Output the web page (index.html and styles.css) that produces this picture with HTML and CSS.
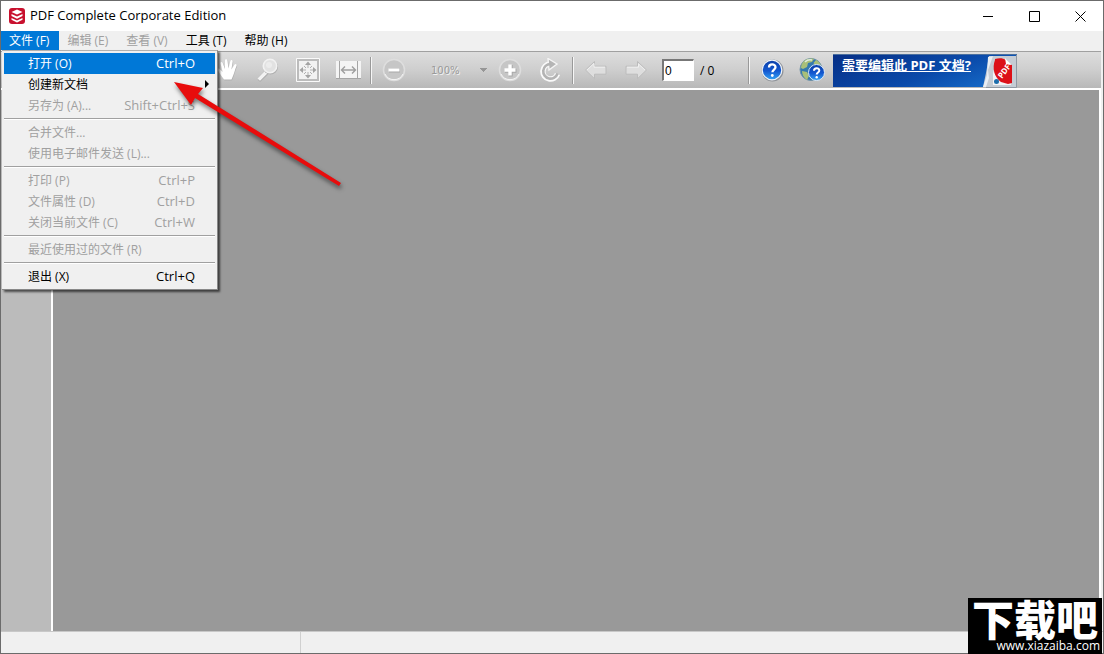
FILE: index.html
```html
<!DOCTYPE html>
<html lang="zh-CN">
<head>
    <meta charset="UTF-8">
    <meta name="viewport" content="width=device-width, initial-scale=1.0">
    <title>PDF Complete Corporate Edition</title>
    <link rel="stylesheet" href="styles.css">
</head>
<body>
<div class="window">
    <header class="titlebar">
        <svg class="app-icon" viewBox="0 0 16 16" width="16" height="16">
            <rect width="16" height="16" rx="3" fill="#c8102e"/>
            <path d="M8 1.500l5.500 2.500L8 6.500 2.500 4z" fill="#fff"/>
            <path d="M2.500 6l5.500 2.500L13.500 6v2L8 10.800 2.500 8zM2.500 10L8 12.500l5.500-2.500v1.800L8 14.600l-5.500-2.800z" fill="#fff"/>
        </svg>
        <span class="title">PDF Complete Corporate Edition</span>
        <div class="window-buttons">
            <button type="button" aria-label="最小化"><svg viewBox="0 0 11 11" width="11" height="11"><path d="M0 5.500h10"/></svg></button>
            <button type="button" aria-label="最大化"><svg viewBox="0 0 11 11" width="11" height="11"><path d="M.5 .5h10v10h-10z"/></svg></button>
            <button type="button" aria-label="关闭"><svg viewBox="0 0 11 11" width="11" height="11"><path d="M.5 .5l10 10M10.500 .5l-10 10"/></svg></button>
        </div>
    </header>

    <nav class="menubar">
        <div class="menu">
            <button type="button" class="menu-title active">文件 (F)</button>
            <div class="dropdown">
                <button type="button" class="item selected"><span>打开 (O)</span><span class="key">Ctrl+O</span></button>
                <button type="button" class="item submenu"><span>创建新文档</span></button>
                <button type="button" class="item" disabled><span>另存为 (A)...</span><span class="key">Shift+Ctrl+S</span></button>
                <hr>
                <button type="button" class="item" disabled><span>合并文件...</span></button>
                <button type="button" class="item" disabled><span>使用电子邮件发送 (L)...</span></button>
                <hr>
                <button type="button" class="item" disabled><span>打印 (P)</span><span class="key">Ctrl+P</span></button>
                <button type="button" class="item" disabled><span>文件属性 (D)</span><span class="key">Ctrl+D</span></button>
                <button type="button" class="item" disabled><span>关闭当前文件 (C)</span><span class="key">Ctrl+W</span></button>
                <hr>
                <button type="button" class="item" disabled><span>最近使用过的文件 (R)</span></button>
                <hr>
                <button type="button" class="item"><span>退出 (X)</span><span class="key">Ctrl+Q</span></button>
            </div>
        </div>
        <button type="button" class="menu-title" disabled>编辑 (E)</button>
        <button type="button" class="menu-title" disabled>查看 (V)</button>
        <button type="button" class="menu-title">工具 (T)</button>
        <button type="button" class="menu-title">帮助 (H)</button>
    </nav>

    <div class="toolbar">
        <button type="button" class="tool" aria-label="手形工具">
            <svg viewBox="0 0 24 24" width="24" height="24">
                <path class="shade" d="M8.500 22.500C6 19 3.500 15 2 12.500c-.6-1.300 1-2 2-1l3.200 3L5 6c-.3-1.600 1.700-2 2.200-.6l2.300 6L9.600 3c0-1.600 2.300-1.600 2.500 0l.8 8 2-7.500c.5-1.500 2.600-1 2.300.6l-1.300 8 3.200-5c1-1.300 2.600-.3 2 1.200-2 4.500-2.500 9-5.100 14.200z"/>
                <path fill="#fff" d="M8 21.500C5.500 18 3 14.500 1.500 12c-.6-1.300 1-2 2-1l3.200 3L4.500 5.500c-.3-1.600 1.700-2 2.200-.6l2.300 6L9 2.500c0-1.600 2.300-1.600 2.500 0l.9 8 2-7.500c.5-1.500 2.600-1 2.300.6l-1.300 8 3.200-5c1-1.300 2.600-.3 2 1.200-2 4.500-2.500 8.700-5.100 13.700z"/>
            </svg>
        </button>
        <button type="button" class="tool" aria-label="放大镜">
            <svg viewBox="0 0 24 24" width="24" height="24">
                <path class="shade" d="M10 14.500l2.200 2-8 7.500-2.500-2z"/>
                <path d="M9 12.500l2.800 2.700-7.800 7.800-2.800-2.500z" fill="#f2f2f2" stroke="#b2b2b2" stroke-width=".5"/>
                <circle cx="14.500" cy="9" r="7.500" class="shade"/>
                <circle cx="14" cy="8" r="6.700" fill="#e2e2e2" stroke="#f2f2f2" stroke-width="1.600"/>
                <circle cx="13" cy="7" r="3" fill="#ececec"/>
            </svg>
        </button>
        <button type="button" class="tool" aria-label="适合页面">
            <svg viewBox="0 0 24 24" width="24" height="24">
                <path d="M.5 .5h23v23H.5z" fill="#bcbcbc" stroke="#fafafa"/>
                <path d="M3 3h18v18H3z" fill="#f2f2f2"/>
                <path d="M12 3.500l3 3.500H9zM12 20.500l3-3.500H9zM3.500 12l3.500-3v6zM20.500 12l-3.500-3v6z" fill="#a3a3a3"/>
                <path d="M12 7v3M12 14v3M7 12h3M14 12h3M8 8l2 2M16 8l-2 2M8 16l2-2M16 16l-2-2" stroke="#b1b1b1"/>
            </svg>
        </button>
        <button type="button" class="tool" aria-label="适合宽度">
            <svg viewBox="0 0 25 20" width="25" height="20">
                <path d="M0 1h25v18H0z" fill="#f4f4f4"/>
                <path d="M3.500 1v17M21.500 1v17M0 18.500h25" stroke="#a5a5a5"/>
                <path d="M5.500 10h14M9 6.500L5.500 10 9 13.500M16 6.500l3.500 3.500-3.500 3.500" fill="none" stroke="#9e9e9e" stroke-width="1.400"/>
            </svg>
        </button>
        <span class="divider"></span>
        <button type="button" class="tool" aria-label="缩小">
            <svg viewBox="0 0 24 24" width="24" height="24">
                <circle cx="12" cy="12" r="10.500" fill="#c6c6c6" stroke="#dedede" stroke-width="1.500"/>
                <path d="M3 16a10 10 0 0 0 18 0" fill="none" stroke="#f4f4f4"/>
                <path d="M7 12.500h11" stroke="#a8a8a8" stroke-width="4"/>
                <path d="M6.500 12h11" stroke="#fff" stroke-width="3"/>
            </svg>
        </button>
        <select class="zoom" aria-label="缩放" disabled><option>100%</option></select>
        <button type="button" class="tool" aria-label="放大">
            <svg viewBox="0 0 24 24" width="24" height="24">
                <circle cx="12" cy="12" r="10.500" fill="#c6c6c6" stroke="#dedede" stroke-width="1.500"/>
                <path d="M3 16a10 10 0 0 0 18 0" fill="none" stroke="#f4f4f4"/>
                <path d="M7 12.700h11.500M12.700 7v11.500" stroke="#a8a8a8" stroke-width="4"/>
                <path d="M6.500 12h11M12 6.500v11" stroke="#fff" stroke-width="3.400"/>
            </svg>
        </button>
        <button type="button" class="tool" aria-label="旋转">
            <svg viewBox="0 0 24 24" width="24" height="24">
                <path d="M12 6a7.500 7.500 0 1 0 7.500 10" fill="none" stroke="#fafafa" stroke-width="5.500"/>
                <path d="M10 .5l9 5.500-8 6z" fill="#b5b5b5" stroke="#f5f5f5" stroke-width="1.400"/>
                <path d="M12.500 6a7.300 7.300 0 1 0 7 9.500" fill="none" stroke="#b3b3b3" stroke-width="2.600"/>
            </svg>
        </button>
        <span class="divider"></span>
        <button type="button" class="tool" aria-label="上一页">
            <svg viewBox="0 0 24 20" width="24" height="20">
                <path d="M1.500 10l9-8.500v4.700H22v8H10.500v4.500z" fill="#dedede" stroke="#bcbcbc"/>
                <path d="M3 10l7-6.500v3.700h11" fill="none" stroke="#f0f0f0"/>
            </svg>
        </button>
        <button type="button" class="tool" aria-label="下一页">
            <svg viewBox="0 0 24 20" width="24" height="20">
                <path d="M22.500 10l-9-8.500v4.700H2v8h11.500v4.500z" fill="#dedede" stroke="#bcbcbc"/>
                <path d="M3 7.200h11.500V4l6.500 6" fill="none" stroke="#f0f0f0"/>
            </svg>
        </button>
        <input type="text" class="page" id="page" value="0">
        <label class="pages" for="page">/ 0</label>
        <span class="divider"></span>
        <button type="button" class="tool" aria-label="帮助">
            <svg viewBox="0 0 24 24" width="24" height="24">
                <defs>
                    <linearGradient id="blue" x1="0" y1="0" x2="0" y2="1">
                        <stop offset="0" stop-color="#0b3fa8"/>
                        <stop offset=".55" stop-color="#1358d0"/>
                        <stop offset="1" stop-color="#35a3f5"/>
                    </linearGradient>
                </defs>
                <circle cx="12.500" cy="12.500" r="11" fill="#8f9399"/>
                <circle cx="12" cy="12" r="9.800" fill="url(#blue)" stroke="#f0f4fa" stroke-width="1.200"/>
                <path d="M9 9.500c0-4 6.500-4 6.500-.2 0 2.300-3.100 2.300-3.100 5" fill="none" stroke="#fff" stroke-width="2.300"/>
                <circle cx="12.300" cy="17.500" r="1.400" fill="#fff"/>
            </svg>
        </button>
        <button type="button" class="tool" aria-label="在线帮助">
            <svg viewBox="0 0 26 26" width="26" height="26">
                <circle cx="12" cy="12.500" r="11" fill="#3479ae" stroke="#6f92a8"/>
                <path d="M5 4c3-2.500 7-3 10-2l-2 3-4 1-1 4-4 2-2-1c0-3 1-5 3-7zM17 3c4 2 5 5 5.500 8l-5-1-3-4zM3 14l5 1 2 4-2 4c-3-2-5-5-5-9z" fill="#a9bf78"/>
                <path d="M6 5c2-2 5-2.500 7-2" fill="none" stroke="#dfeadf" stroke-width="1.500"/>
                <circle cx="17.500" cy="15.500" r="8" fill="url(#blue)" stroke="#dce9f7"/>
                <path d="M15 13.800c0-3.500 5.300-3.500 5.300-.3 0 2-2.600 1.900-2.600 4" fill="none" stroke="#fff" stroke-width="2"/>
                <circle cx="17.700" cy="20.300" r="1.200" fill="#fff"/>
            </svg>
        </button>
        <a class="banner" href="#">
            <span class="banner-text">需要编辑此 PDF 文档?</span>
            <svg class="banner-logo" viewBox="0 0 34 33" width="34" height="33">
                <path d="M6 1h27v31H0l3-14z" fill="#c5ccd4"/>
                <path d="M5 2l5-1-5 14 1 8-3 9H0l4-12z" fill="#e9eef4"/>
                <path d="M33.500 0v32.500H3" fill="none" stroke="#8f98a2"/>
                <path d="M10 18v12h18V9l-6-5h-8z" fill="#f3f3f5"/>
                <path d="M12 4c4-1 8-1 11 1l1 4 5 1v18l-4 1-7-2c-7-5-9-14-6-22z" fill="#dc1018"/>
                <path d="M22 3l6 7-5-1z" fill="#fff"/>
                <circle cx="13.500" cy="26.500" r="2.500" fill="#1d6eac"/>
                <text x="0" y="0" transform="translate(19 24) rotate(-54)" fill="#fff" font-size="8" font-weight="bold">PDF</text>
            </svg>
        </a>
    </div>

    <main class="workspace">
        <aside class="sidebar"></aside>
        <section class="document"></section>
    </main>

    <footer class="statusbar">
        <div class="status-cell"></div>
    </footer>
</div>

<!-- 指向菜单的红色箭头 -->
<svg class="pointer" viewBox="0 0 180 116" width="180" height="116">
    <path d="M4 6l29 6-5 6 143 89-2 3L25 22l-4 7z" fill="#e80c0c"/>
</svg>

<div class="watermark">
    <span class="watermark-name">下载吧</span>
    <span class="watermark-url">www.xiazaiba.com</span>
</div>
</body>
</html>
```

FILE: styles.css
```css
* {
    box-sizing: border-box;
}
body {
    margin: 0;
    font-family: "Open Sans", "Noto Sans CJK SC", sans-serif;
    font-size: 12px;
    color: #000000;
    overflow: hidden;
}
button {
    font: inherit;
    color: inherit;
    background: none;
    border: none;
    padding: 0;
}
.window {
    height: 100vh;
    display: flex;
    flex-direction: column;
    border: 1px solid #6b6b6b;
    background-color: #f0f0f0;
}

/* 标题栏 */
.titlebar {
    display: flex;
    align-items: center;
    height: 30px;
    padding-left: 8px;
    background-color: #ffffff;
}
.title {
    margin-left: 5px;
    padding-bottom: 2px;
    font-size: 13px;
}
.window-buttons {
    display: flex;
    margin-left: auto;
}
.window-buttons button {
    display: flex;
    align-items: center;
    justify-content: center;
    width: 46px;
    height: 30px;
}
.window-buttons path {
    fill: none;
    stroke: #000000;
}

/* 菜单栏 */
.menubar {
    display: flex;
    height: 20px;
    flex-shrink: 0;
}
.menu {
    position: relative;
}
.menu-title {
    height: 19px;
    padding: 0 10px 0 8px;
    line-height: 19px;
    white-space: nowrap;
}
.menu-title:disabled, .item:disabled {
    color: #a0a0a0;
}
.menu-title.active, .item.selected {
    background-color: #0078d7;
    color: #ffffff;
}
.dropdown {
    position: absolute;
    z-index: 10;
    top: 19px;
    left: 1px;
    width: 216px;
    padding: 2px;
    background-color: #f0f0f0;
    border-top: 1px solid #b0b0b0;
    border-right: 1px solid #888888;
    border-bottom: 1px solid #888888;
    box-shadow: 2px 2px 2px rgba(0, 0, 0, 0.6);
}
.item {
    display: flex;
    align-items: center;
    justify-content: space-between;
    width: 100%;
    height: 21px;
    padding: 0 20px 2px 24px;
    white-space: nowrap;
}
.key {
    font-size: 13px;
}
.item.submenu {
    padding-right: 6px;
}
.item.submenu::after {
    content: "";
    border: 4px solid transparent;
    border-left-color: #000000;
    border-right: none;
}
.dropdown hr {
    height: 2px;
    margin: 2px 0;
    border: none;
    border-top: 1px solid #a0a0a0;
    background-color: #ffffff;
}

/* 工具栏 */
.toolbar {
    display: flex;
    align-items: center;
    height: 39px;
    flex-shrink: 0;
    margin-right: 2px;
    padding-left: 207px;
    border-top: 1px solid #a0a0a0;
    border-bottom: 2px solid #ffffff;
    background: linear-gradient(#dddddd, #cecece 50%, #b8b8b8);
}
.tool {
    display: flex;
    align-items: center;
    justify-content: center;
    flex: none;
    width: 40px;
    height: 34px;
}
.shade {
    fill: #b0b0b0;
}
.divider {
    flex: none;
    width: 2px;
    height: 27px;
    margin: 0 2px;
    border-left: 1px solid #999999;
    background-color: #f6f6f6;
}
.zoom {
    width: 76px;
    padding: 0 0 0 17px;
    border: none;
    appearance: none;
    font-family: "DejaVu Sans", sans-serif;
    font-size: 10px;
    color: #999999;
    opacity: 1;
    text-shadow: 1px 1px 0 #f2f2f2;
    background: linear-gradient(135deg, #969696 50%, transparent 50%) 70px 50% / 4px 4px no-repeat,
        linear-gradient(225deg, #969696 50%, transparent 50%) 66px 50% / 4px 4px no-repeat;
}
.page {
    width: 32px;
    height: 22px;
    margin-left: 6px;
    padding: 0 1px;
    border: 1px solid #ffffff;
    border-top: 2px solid #777777;
    border-left: 2px solid #777777;
    font-family: "Liberation Sans", sans-serif;
    font-size: 12px;
}
.pages {
    width: 52px;
    padding-left: 6px;
}
.banner {
    display: flex;
    flex: none;
    width: 184px;
    height: 33px;
    margin-left: 1px;
    background: linear-gradient(160deg, #062f86, #0a4aaa 55%, #1973cf);
    border-top: 1px solid #4a6f9f;
    color: #ffffff;
    font-size: 13px;
    font-weight: bold;
}
.banner-text {
    flex: 1;
    padding-left: 9px;
    line-height: 20px;
    white-space: nowrap;
    text-decoration: underline;
}
.banner-logo {
    flex: none;
}

/* 工作区 */
.workspace {
    display: flex;
    flex: 1;
    margin-right: 2px;
    border-right: 2px solid #ffffff;
}
.sidebar {
    width: 52px;
    background-color: #bbbbbb;
    border-right: 2px solid #ffffff;
}
.document {
    flex: 1;
    background-color: #999999;
}
.statusbar {
    display: flex;
    height: 22px;
    flex-shrink: 0;
    border-top: 1px solid #c8c8c8;
}
.status-cell {
    width: 300px;
    border-right: 1px solid #d0d0d0;
}

.pointer {
    position: absolute;
    z-index: 20;
    top: 76px;
    left: 170px;
    filter: drop-shadow(1px 3px 2px rgba(0, 0, 0, 0.5));
}
.watermark {
    position: absolute;
    right: 2px;
    bottom: 0;
    display: flex;
    flex-direction: column;
    width: 134px;
    height: 56px;
    background-color: #000000;
    color: #ffffff;
    text-align: center;
}
.watermark-name {
    font-family: "Noto Sans CJK SC", sans-serif;
    font-size: 42px;
    font-weight: 900;
    line-height: 40px;
}
.watermark-url {
    padding-right: 2px;
    font-size: 12px;
    line-height: 16px;
    text-align: right;
}
```
